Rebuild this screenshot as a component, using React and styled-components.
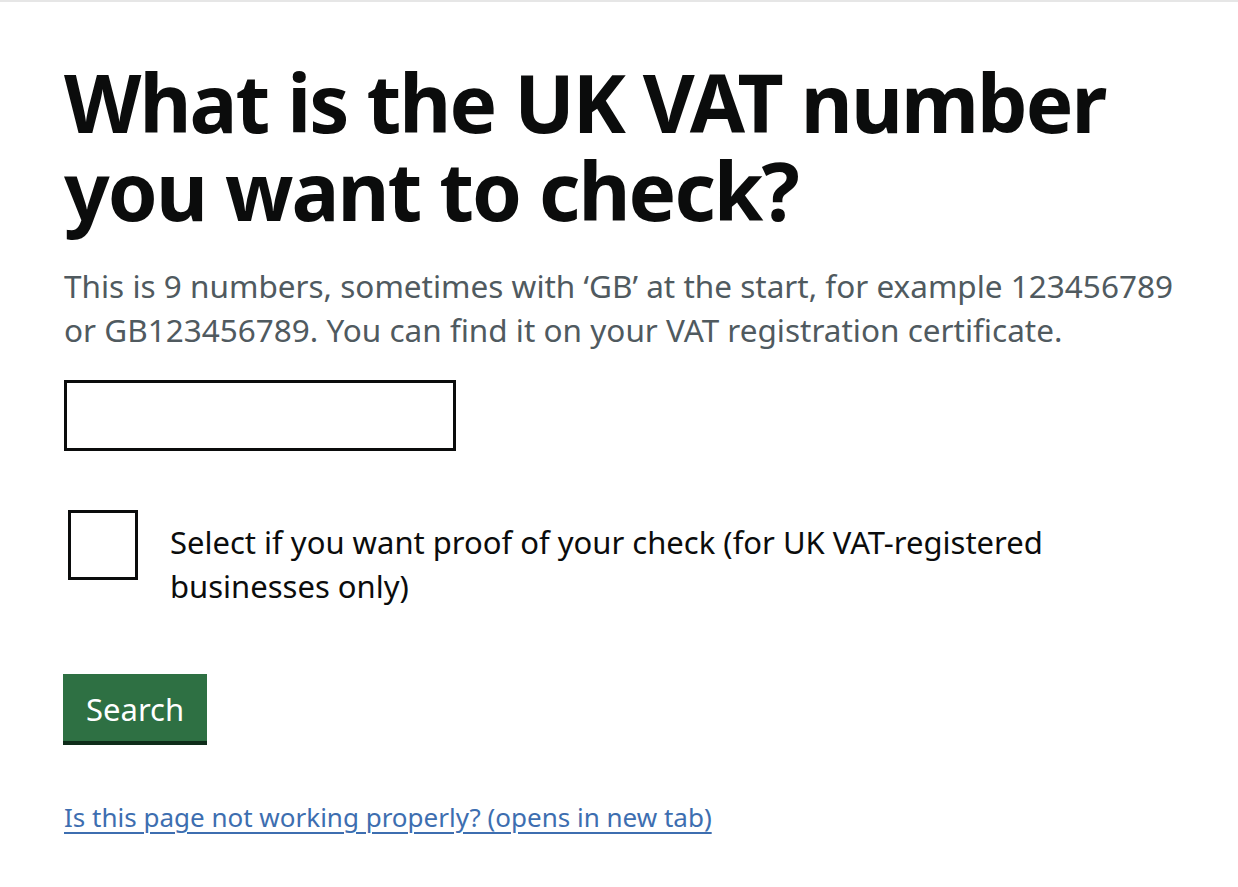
import React from 'react'
import styled, { createGlobalStyle } from 'styled-components'

const GlobalStyle = createGlobalStyle`
  html, body {
    margin: 0;
    padding: 0;
    background: #ffffff;
  }

  body {
    font-family: "Noto Sans", "Liberation Sans", Arial, sans-serif;
    color: #0b0c0c;
  }
`

const Page = styled.main`
  border-top: 2px solid #e6e6e6;
  padding: 56px 64px 40px 64px;
  box-sizing: border-box;
  width: 1238px;
  min-height: 887px;
`

const Heading = styled.h1`
  margin: 0 0 30px 0;
  font-size: 80px;
  line-height: 88px;
  font-weight: 700;
  letter-spacing: -1.9px;
  color: #0b0c0c;
`

const Hint = styled.p`
  margin: 0 0 28px 0;
  max-width: 1125px;
  font-size: 31.5px;
  line-height: 44px;
  color: #505a5f;
`

const TextInput = styled.input`
  display: block;
  width: 392px;
  height: 71px;
  box-sizing: border-box;
  border: 3px solid #0b0c0c;
  border-radius: 0;
  padding: 8px;
  font: inherit;
  font-size: 30px;
  margin: 0 0 59px 0;
  background: #fff;
`

const CheckboxRow = styled.label`
  display: flex;
  align-items: flex-start;
  gap: 32px;
  margin: 0 0 66px 4px;
  cursor: pointer;
`

const Box = styled.span`
  flex: none;
  width: 70px;
  height: 70px;
  box-sizing: border-box;
  border: 3px solid #0b0c0c;
  background: #fff;
`

const CheckboxLabel = styled.span`
  padding-top: 10px;
  font-size: 31px;
  line-height: 44px;
  color: #0b0c0c;
  max-width: 900px;
`

const Button = styled.button`
  display: block;
  border: 0;
  border-radius: 0;
  background: #2e7043;
  box-shadow: 0 4px 0 #0f2d1a;
  color: #ffffff;
  font: inherit;
  font-size: 31px;
  line-height: 36px;
  padding: 17px 23px 14px 23px;
  margin: 0 0 58px -1px;
  cursor: pointer;
`

const HelpLink = styled.a`
  font-size: 26px;
  line-height: 36px;
  color: #3d6eb0;
  text-decoration: underline;
  text-decoration-thickness: 2px;
  text-underline-offset: 5px;
`

export default function App() {
  return (
    <>
      <GlobalStyle />
      <Page>
        <Heading>What is the UK VAT number you want to check?</Heading>
        <Hint>
          This is 9 numbers, sometimes with ‘GB’ at the start, for example 123456789
          or GB123456789. You can find it on your VAT registration certificate.
        </Hint>
        <TextInput type="text" aria-label="UK VAT number" />
        <CheckboxRow>
          <Box />
          <CheckboxLabel>
            Select if you want proof of your check (for UK VAT-registered businesses only)
          </CheckboxLabel>
        </CheckboxRow>
        <Button type="button">Search</Button>
        <HelpLink href="#">Is this page not working properly? (opens in new tab)</HelpLink>
      </Page>
    </>
  )
}
